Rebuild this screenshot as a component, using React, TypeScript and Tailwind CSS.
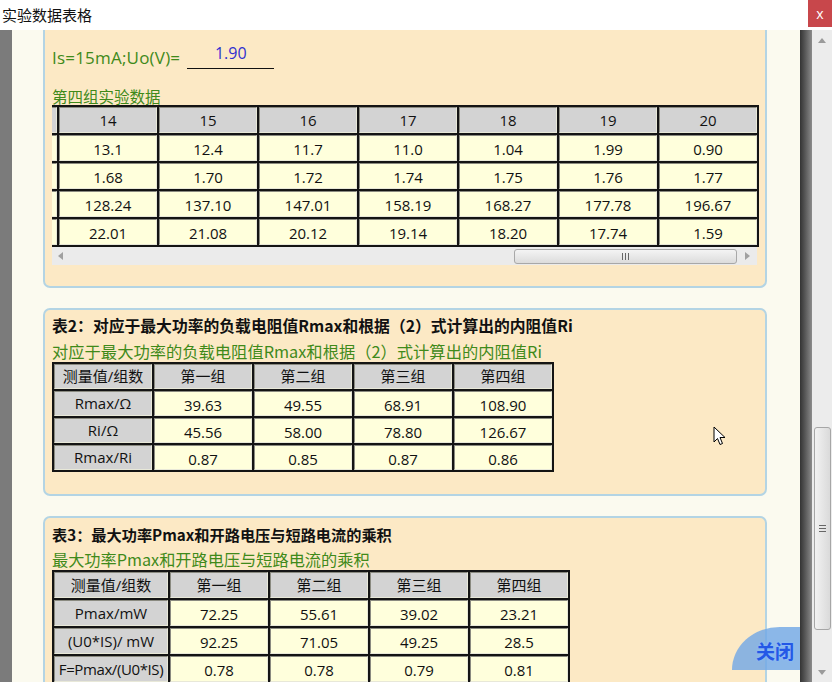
import React from 'react';

const t1Cols = ['', '14', '15', '16', '17', '18', '19', '20'];
const t1Rows = [
  ['', '13.1', '12.4', '11.7', '11.0', '1.04', '1.99', '0.90'],
  ['', '1.68', '1.70', '1.72', '1.74', '1.75', '1.76', '1.77'],
  ['', '128.24', '137.10', '147.01', '158.19', '168.27', '177.78', '196.67'],
  ['', '22.01', '21.08', '20.12', '19.14', '18.20', '17.74', '1.59'],
];

const t2 = {
  head: ['测量值/组数', '第一组', '第二组', '第三组', '第四组'],
  rows: [
    ['Rmax/Ω', '39.63', '49.55', '68.91', '108.90'],
    ['Ri/Ω', '45.56', '58.00', '78.80', '126.67'],
    ['Rmax/Ri', '0.87', '0.85', '0.87', '0.86'],
  ],
};

const t3 = {
  head: ['测量值/组数', '第一组', '第二组', '第三组', '第四组'],
  rows: [
    ['Pmax/mW', '72.25', '55.61', '39.02', '23.21'],
    ['(U0*IS)/ mW', '92.25', '71.05', '49.25', '28.5'],
    ['F=Pmax/(U0*IS)', '0.78', '0.78', '0.79', '0.81'],
  ],
};

const cellBase =
  'flex items-center justify-center text-[15px] text-[#111] border border-t-[#8a8a80] border-l-[#8a8a80] border-b-[#e8e8d8] border-r-[#e8e8d8] whitespace-nowrap overflow-hidden';

type CellProps = { children: React.ReactNode; h?: string; extra?: string };

const HeadCell = ({ children, h = 'h-[26px]', extra = '' }: CellProps) => (
  <div className={`${cellBase} ${h} ${extra} bg-[#d3d3d3]`}>{children}</div>
);

const DataCell = ({ children, h = 'h-[26px]' }: CellProps) => (
  <div className={`${cellBase} ${h} bg-[#ffffdc] pt-[3px]`}>{children}</div>
);

const Panel = ({ children, top = true }: { children: React.ReactNode; top?: boolean }) => (
  <div
    className={`bg-[#fce9c5] border-2 border-[#b3d4e4] px-[7px] ${
      top ? 'rounded-[7px]' : 'border-t-0 rounded-b-[7px]'
    }`}
  >
    {children}
  </div>
);

const SmallTable = ({ data, cols, h }: { data: typeof t2; cols: string; h: string }) => (
  <div className={`grid ${cols} gap-[2px] p-[2px] bg-[#141414] w-fit`}>
    {data.head.map((x) => (
      <HeadCell key={x} h={h}>
        {x}
      </HeadCell>
    ))}
    {data.rows.map((r) =>
      r.map((c, i) =>
        i === 0 ? (
          <HeadCell key={c + i} h={h} extra={c.length > 12 ? 'tracking-[-0.4px] text-[14.5px]' : ''}>
            {c}
          </HeadCell>
        ) : (
          <DataCell key={c + i + r[0]} h={h}>
            {c}
          </DataCell>
        )
      )
    )}
  </div>
);

export default function App() {
  return (
    <div className="w-[832px] h-[682px] overflow-hidden flex flex-col bg-white font-['Open_Sans','Noto_Sans_CJK_SC',sans-serif]">
      {/* title bar */}
      <div className="h-[30px] flex items-start justify-between shrink-0">
        <div className="pl-[2px] pt-[4px] text-[15px] text-[#111] font-['Noto_Sans_CJK_SC',sans-serif]">实验数据表格</div>
        <div className="w-[24px] h-[27px] bg-[#c8474b] text-white text-[14px] flex items-center justify-center">x</div>
      </div>

      <div className="flex-1 flex min-h-0">
        <div className="w-[12px] bg-[#7b7b7b]" />

        <div className="flex-1 relative overflow-hidden bg-[#fbfaef] pl-[31px] pr-[33px]">
          <div className="flex flex-col gap-[20px]">
            {/* panel 1 (scrolled) */}
            <Panel top={false}>
              <div className="pt-[14px] flex items-end gap-[7px]">
                <span className="text-[17px] text-[#3f8a1a] leading-[22px] tracking-[0.2px]">Is=15mA;Uo(V)=</span>
                <div className="w-[87px] h-[25px] border-b-[1.5px] border-[#111] text-center text-[16px] text-[#3030d0] leading-[18px]">
                  1.90
                </div>
              </div>
              <div className="mt-[18px] text-[15.5px] text-[#3f8a1a] leading-[18px] font-['Noto_Sans_CJK_SC',sans-serif]">
                第四组实验数据
              </div>
              <div className="w-[707px] overflow-hidden">
                <div className="-ml-[95px] grid grid-cols-[repeat(8,98px)] gap-[2px] p-[2px] bg-[#141414] w-fit">
                  {t1Cols.map((c, i) => (
                    <HeadCell key={'h' + i}>{c}</HeadCell>
                  ))}
                  {t1Rows.map((r, ri) => r.map((c, i) => <DataCell key={ri + '-' + i}>{c}</DataCell>))}
                </div>
                {/* horizontal scrollbar */}
                <div className="h-[18px] w-[705px] bg-[#ebebeb] flex items-center">
                  <div className="w-[17px] flex items-center justify-center">
                    <svg width="6" height="8" viewBox="0 0 6 8"><path d="M5 0 L0 4 L5 8 Z" fill="#a0a0a0" /></svg>
                  </div>
                  <div className="flex-1" />
                  <div className="w-[223px] h-[15px] rounded-[3px] border border-[#a8a8a8] bg-gradient-to-b from-[#f4f4f4] to-[#dcdcdc] flex items-center justify-center gap-[2px]">
                    <div className="w-[1px] h-[7px] bg-[#666]" />
                    <div className="w-[1px] h-[7px] bg-[#666]" />
                    <div className="w-[1px] h-[7px] bg-[#666]" />
                  </div>
                  <div className="w-[20px] flex items-center justify-center">
                    <svg width="6" height="8" viewBox="0 0 6 8"><path d="M1 0 L6 4 L1 8 Z" fill="#a0a0a0" /></svg>
                  </div>
                </div>
              </div>
              <div className="h-[21px]" />
            </Panel>

            {/* panel 2 */}
            <Panel>
              <div className="pt-[6px] text-[15.8px] font-bold text-[#111] leading-[20px] font-['Noto_Sans_CJK_SC',sans-serif]">
                表2：对应于最大功率的负载电阻值Rmax和根据（2）式计算出的内阻值Ri
              </div>
              <div className="mt-[5px] text-[16.3px] text-[#3f8a1a] leading-[21px] font-['Noto_Sans_CJK_SC',sans-serif]">
                对应于最大功率的负载电阻值Rmax和根据（2）式计算出的内阻值Ri
              </div>
              <SmallTable data={t2} cols="grid-cols-[repeat(5,98px)]" h="h-[25px]" />
              <div className="h-[22px]" />
            </Panel>

            {/* panel 3 */}
            <Panel>
              <div className="pt-[6px] text-[15.2px] font-bold text-[#111] leading-[20px] font-['Noto_Sans_CJK_SC',sans-serif]">
                表3：最大功率Pmax和开路电压与短路电流的乘积
              </div>
              <div className="mt-[5px] text-[16.2px] text-[#3f8a1a] leading-[21px] font-['Noto_Sans_CJK_SC',sans-serif]">
                最大功率Pmax和开路电压与短路电流的乘积
              </div>
              <SmallTable data={t3} cols="grid-cols-[114px_repeat(4,98px)]" h="h-[26px]" />
              <div className="h-[20px]" />
            </Panel>
          </div>

          {/* mouse cursor */}
          <svg className="absolute left-[701px] top-[396px]" width="13" height="20" viewBox="0 0 13 20">
            <path d="M1 1 L1 16 L4.5 12.5 L7 18.5 L9.5 17.5 L7 11.5 L12 11.5 Z" fill="#fff" stroke="#000" strokeWidth="1" strokeLinejoin="round" />
          </svg>

          {/* close badge */}
          <div className="absolute left-[720px] top-[597px] w-[68px] h-[43px] rounded-tl-[70%_100%] bg-[#6fa6e6]/80 flex items-center justify-end pr-[6px] pt-[4px]">
            <span className="text-[19px] font-bold text-[#2458e6] leading-none font-['Noto_Sans_CJK_SC',sans-serif] [text-shadow:0_0_3px_#8fc0ff]">
              关闭
            </span>
          </div>
        </div>

        <div className="w-[12px] bg-gradient-to-r from-[#343434] to-[#8c8c8c]" />

        {/* vertical scrollbar */}
        <div className="w-[20px] bg-[#ececec] flex flex-col items-center">
          <div className="h-[20px] flex items-center justify-center">
            <svg width="8" height="5" viewBox="0 0 8 5"><path d="M0 5 L4 0 L8 5 Z" fill="#9a9a9a" /></svg>
          </div>
          <div className="h-[377px]" />
          <div className="w-[17px] h-[203px] rounded-[3px] border border-[#a6a6a6] bg-gradient-to-r from-[#f2f2f2] to-[#dadada] flex items-center justify-center">
            <div className="flex flex-col gap-[2px]">
              <div className="w-[7px] h-[1px] bg-[#666]" />
              <div className="w-[7px] h-[1px] bg-[#666]" />
              <div className="w-[7px] h-[1px] bg-[#666]" />
            </div>
          </div>
          <div className="flex-1" />
          <div className="h-[20px] flex items-center justify-center">
            <svg width="8" height="5" viewBox="0 0 8 5"><path d="M0 0 L4 5 L8 0 Z" fill="#9a9a9a" /></svg>
          </div>
        </div>
      </div>
    </div>
  );
}
